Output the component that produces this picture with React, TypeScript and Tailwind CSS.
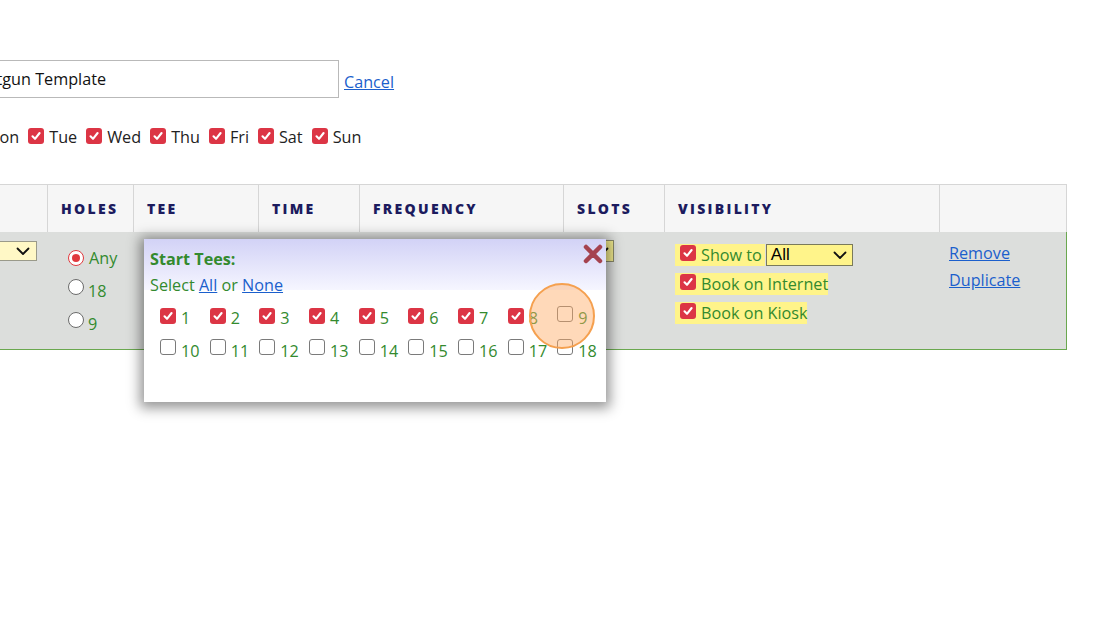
import React from "react";

const GREEN = "text-[#338a2e]";

function Check({ checked = true }: { checked?: boolean }) {
  if (checked) {
    return (
      <span className="inline-flex h-[16px] w-[16px] shrink-0 items-center justify-center rounded-[3px] bg-[#dc3545]">
        <svg width="12" height="12" viewBox="0 0 12 12">
          <path d="M2.5 6.3 L5 8.8 L9.6 3" fill="none" stroke="#fff" strokeWidth="2.1" strokeLinecap="round" strokeLinejoin="round" />
        </svg>
      </span>
    );
  }
  return <span className="inline-block h-[16px] w-[16px] shrink-0 rounded-[3px] border-[1.5px] border-[#7a7a7a] bg-white" />;
}

function Radio({ checked = false }: { checked?: boolean }) {
  if (checked) {
    return (
      <span className="inline-flex h-[16px] w-[16px] shrink-0 items-center justify-center rounded-full border-[1.5px] border-[#e0393e] bg-white">
        <span className="h-[8px] w-[8px] rounded-full bg-[#e0393e]" />
      </span>
    );
  }
  return <span className="inline-block h-[16px] w-[16px] shrink-0 rounded-full border border-[#6b6b6b] bg-white" />;
}

function Chevron({ className = "" }: { className?: string }) {
  return (
    <svg width="14" height="9" viewBox="0 0 14 9" className={className}>
      <path d="M1.5 1.5 L7 7 L12.5 1.5" fill="none" stroke="#111" strokeWidth="1.8" strokeLinecap="round" strokeLinejoin="round" />
    </svg>
  );
}

const days = ["Mon", "Tue", "Wed", "Thu", "Fri", "Sat", "Sun"];

const headerCols: { label: string; w: string }[] = [
  { label: "HOLES", w: "w-[86px]" },
  { label: "TEE", w: "w-[125px]" },
  { label: "TIME", w: "w-[101px]" },
  { label: "FREQUENCY", w: "w-[204px]" },
  { label: "SLOTS", w: "w-[101px]" },
  { label: "VISIBILITY", w: "w-[275px]" },
];

export default function App() {
  return (
    <div className="relative h-[625px] w-[1120px] overflow-hidden bg-white font-['Open_Sans',sans-serif] text-[16.2px] leading-[24px] text-[#222]">
      {/* Name input + cancel */}
      <div className="ml-[-41px] flex items-start pt-[60px]">
        <div className="flex h-[38px] w-[380px] items-center border border-[#b9b9b9] bg-white pl-[8px] text-[#111]">
          Shotgun Template
        </div>
        <a className="ml-[5px] mt-[10px] text-[#1b5fcc] underline">Cancel</a>
      </div>

      {/* Days */}
      <div className="ml-[-36px] mt-[27px] flex h-[24px] items-center">
        {days.map((d) => (
          <span key={d} className="mr-[9px] flex items-center">
            <span className="mt-[-3px]">
              <Check />
            </span>
            <span className="ml-[5px] text-[#222]">{d}</span>
          </span>
        ))}
      </div>

      {/* Table */}
      <div className="mt-[35px] w-[1067px]">
        {/* header */}
        <div className="flex h-[48px] border-t border-[#d6d6d6] bg-[#f6f6f6]">
          <div className="w-[47px]" />
          {headerCols.map((c) => (
            <div
              key={c.label}
              className={`${c.w} flex items-center border-l border-[#d6d6d6] pl-[13px] text-[14px] font-extrabold tracking-[2.3px] text-[#1c1b5e]`}
            >
              {c.label}
            </div>
          ))}
          <div className="w-[128px] border-x border-[#d6d6d6]" />
        </div>

        {/* body row */}
        <div className="flex h-[118px] border-b border-r border-[#6aa84f] bg-[#dcdedc]">
          {/* col0 select */}
          <div className="w-[47px] pt-[9px]">
            <div className="flex h-[20px] w-[37px] items-center justify-end border border-l-0 border-[#9a9a8a] bg-[#fff8c6] pr-[6px]">
              <Chevron />
            </div>
          </div>

          {/* holes */}
          <div className={`w-[86px] pl-[21px] pt-[14px] ${GREEN}`}>
            <div className="flex flex-col gap-[9px]">
              <div className="flex h-[24px] items-center">
                <span className="mt-[-4px]"><Radio checked /></span>
                <span className="ml-[5px]">Any</span>
              </div>
              <div className="flex h-[24px] items-center">
                <span className="mt-[-4px]"><Radio /></span>
                <span className="ml-[4px]">18</span>
              </div>
              <div className="flex h-[24px] items-center">
                <span className="mt-[-4px]"><Radio /></span>
                <span className="ml-[4px]">9</span>
              </div>
            </div>
          </div>

          <div className="w-[125px]" />
          <div className="w-[101px]" />
          <div className="w-[204px]" />

          {/* slots */}
          <div className="w-[101px] pl-[14px] pt-[8px]">
            <div className="flex h-[22px] w-[37px] items-center justify-end border border-[#8a8a6a] bg-[#f3ec8e] pr-[4px]">
              <Chevron />
            </div>
          </div>

          {/* visibility */}
          <div className={`w-[275px] pl-[11px] pt-[12px] ${GREEN}`}>
            <div className="flex flex-col gap-[7px]">
              <div className="flex h-[22px] items-center">
                <span className="flex h-[22px] items-center bg-[#fff48a] pl-[5px] pr-[3px]">
                  <span className="mt-[-4px]"><Check /></span>
                  <span className="ml-[5px]">Show to</span>
                </span>
                <span className="ml-[1px] flex h-[22px] w-[87px] items-center justify-between border border-[#7a7a5a] bg-[#fff48a] pl-[4px] pr-[5px] font-['Liberation_Sans',sans-serif] text-[17px] text-black">
                  All
                  <Chevron />
                </span>
              </div>
              <div className="flex h-[22px] items-center">
                <span className="flex h-[22px] items-center bg-[#fff48a] pl-[5px]">
                  <span className="mt-[-4px]"><Check /></span>
                  <span className="ml-[5px]">Book on Internet</span>
                </span>
              </div>
              <div className="flex h-[22px] items-center">
                <span className="flex h-[22px] items-center bg-[#fff48a] pl-[5px]">
                  <span className="mt-[-4px]"><Check /></span>
                  <span className="ml-[5px]">Book on Kiosk</span>
                </span>
              </div>
            </div>
          </div>

          {/* actions */}
          <div className="flex w-[127px] flex-col gap-[3px] pl-[10px] pt-[9px]">
            <a className="text-[#1b5fcc] underline">Remove</a>
            <a className="text-[#1b5fcc] underline">Duplicate</a>
          </div>
        </div>
      </div>

      {/* Popup */}
      <div className="absolute left-[144px] top-[239px] h-[163px] w-[462px] bg-white shadow-[0_2px_12px_4px_rgba(0,0,0,0.42)]">
        <div className={`h-[51px] bg-gradient-to-b from-[#d2d2f6] to-[#f6f6ff] pl-[6px] pt-[8px] ${GREEN}`}>
          <div className="font-bold">Start Tees:</div>
          <div className="mt-[2px]">
            Select <a className="text-[#1b5fcc] underline">All</a> or{" "}
            <a className="text-[#1b5fcc] underline">None</a>
          </div>
        </div>
        <button className="absolute right-[3px] top-[5px]">
          <svg width="20" height="20" viewBox="0 0 20 20">
            <path d="M3 3 L17 17 M17 3 L3 17" stroke="#a5434f" strokeWidth="4.5" strokeLinecap="round" />
          </svg>
        </button>
        <div className={`mt-[16px] grid w-[463px] grid-cols-9 gap-y-[9px] pl-[16px] ${GREEN}`}>
          {Array.from({ length: 18 }, (_, i) => i + 1).map((n) => (
            <div key={n} className="flex h-[24px] items-center">
              <span className="mt-[-5px]">
                <Check checked={n <= 8} />
              </span>
              <span className="ml-[5px]">{n}</span>
            </div>
          ))}
        </div>
      </div>

      {/* click highlight */}
      <div className="absolute left-[529px] top-[283px] h-[66px] w-[66px] rounded-full border-2 border-[#f5a04f] bg-[rgba(255,170,100,0.45)]" />
    </div>
  );
}
